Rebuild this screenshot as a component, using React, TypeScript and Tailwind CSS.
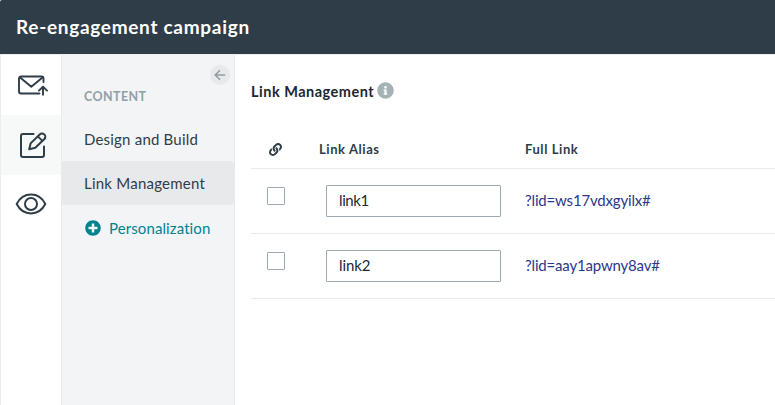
import React from "react";
import { FaInfoCircle, FaLink, FaPlusCircle } from "react-icons/fa";

const rows = [
  { alias: "link1", url: "?lid=ws17vdxgyilx#", aliasSpacing: "tracking-[-0.4px]" },
  { alias: "link2", url: "?lid=aay1apwny8av#", aliasSpacing: "tracking-[-0.1px]" },
];

function MailIcon() {
  return (
    <svg width="32" height="24" viewBox="0 0 32 24" fill="none" stroke="#2f3d48" strokeWidth="1.9" strokeLinecap="round" strokeLinejoin="round">
      <path d="M23.5 19.5H5A2 2 0 0 1 3 17.5V4.5A2 2 0 0 1 5 2.5H25.5A2 2 0 0 1 27.5 4.5V8" />
      <path d="M3.8 3.2L15.3 12.7L26.8 3.2M27 20.8V13.3M23 16.6L27 12.6L31 16.6" />
    </svg>
  );
}

function EditIcon() {
  return (
    <svg width="28" height="28" viewBox="0 0 28 28" fill="none" stroke="#2f3d48" strokeWidth="2" strokeLinecap="round" strokeLinejoin="round">
      <path d="M14.5 3H4A2 2 0 0 0 2 5V24A2 2 0 0 0 4 26H23A2 2 0 0 0 25 24V15.5" />
      <path d="M10.2 18.2L11.6 12.4L20.7 3.5A3.2 3.2 0 0 1 25.4 8L16.3 16.8ZM18.8 5.4L23.4 9.9" />
    </svg>
  );
}

function EyeIcon() {
  return (
    <svg width="32" height="24" viewBox="0 0 32 24" fill="none" stroke="#2f3d48" strokeWidth="2" strokeLinejoin="round">
      <path d="M1.7 12C8.2 -.6 23.8 -.6 30.3 12C23.8 24.6 8.2 24.6 1.7 12Z" />
      <circle cx="16" cy="12" r="6" />
    </svg>
  );
}

export default function App() {
  return (
    <div className="flex h-[405px] w-[775px] flex-col overflow-hidden bg-white font-['Lato',sans-serif] text-[#2f3d48]">
      <header className="flex h-[54px] shrink-0 items-center rounded-tl-[2px] bg-[#2f3d48] pl-4">
        <h1 className="whitespace-nowrap text-[19px] font-bold leading-6 tracking-[0.7px] text-white">Re-engagement campaign</h1>
      </header>
      <div className="flex flex-1 border-t border-[#ebedee]">
        <nav className="flex w-[61px] shrink-0 flex-col border-l border-[#ebedee]">
          <button className="flex h-[60px] items-center justify-center pl-px pt-0.5"><MailIcon /></button>
          <button className="flex h-[60px] items-center justify-center bg-[#f7f9f8] pl-[3px]"><EditIcon /></button>
          <button className="flex h-[60px] items-center justify-center pb-0.5"><EyeIcon /></button>
        </nav>
        <aside className="flex w-[174px] shrink-0 flex-col border-x border-[#e8eaec] bg-[#f3f4f6]">
          <div className="flex h-[30px] items-end justify-end pr-1">
            <button className="flex size-5 items-center justify-center rounded-full bg-[#e7e9ea]">
              <svg width="12" height="12" viewBox="0 0 12 12" fill="none" stroke="#8e9ca2" strokeWidth="1.5">
                <path d="M11.2 6H1.4M6 1.2L1.2 6L6 10.8" />
              </svg>
            </button>
          </div>
          <h2 className="mt-[3px] pl-[22px] text-[12.5px] font-bold leading-[18px] tracking-[0.4px] text-[#91a0a6]">CONTENT</h2>
          <a className="mt-[11px] flex h-11 items-center whitespace-nowrap pl-[22px] text-[15px] tracking-[0.2px]">Design and Build</a>
          <a className="flex h-11 items-center whitespace-nowrap rounded-r-sm bg-[#e8e9eb] pl-[22px] text-[15px] tracking-[0.23px]">Link Management</a>
          <a className="mt-px flex h-11 items-center whitespace-nowrap pl-[23px] text-[15px] tracking-[0.1px] text-[#00838f]">
            <FaPlusCircle size={16} className="mr-2 -mt-px" />
            Personalization
          </a>
        </aside>
        <main className="min-w-0 flex-1 pl-4 pt-[25px]">
          <div className="flex h-[22px] items-center">
            <h2 className="whitespace-nowrap pt-px text-[14.5px] font-bold tracking-[0.5px] text-[#1b2733]">Link Management</h2>
            <FaInfoCircle size={17} className="ml-[3px] -mt-0.5 text-[#a5b3b7]" />
          </div>
          <div className="mt-[29px] grid h-[38px] grid-cols-[68px_206px_1fr] items-center border-b border-[#e8eaeb] text-[13px] font-bold tracking-[0.57px]">
            <FaLink size={13} className="ml-[18px]" />
            <span>Link Alias</span>
            <span>Full Link</span>
          </div>
          {rows.map((row) => (
            <div key={row.alias} className="grid h-[65px] grid-cols-[68px_206px_1fr] items-center border-b border-[#e8eaeb] text-[15px]">
              <input type="checkbox" className="mb-2.5 ml-4 size-[18px] appearance-none rounded-[1px] border border-[#9dabb0] bg-white" />
              <input defaultValue={row.alias} className={"ml-[7px] h-8 w-[175px] rounded-[1px] border border-[#9dabb0] bg-white px-3 pb-0.5 text-[#1b2733] " + row.aliasSpacing} />
              <a className="whitespace-nowrap pb-px tracking-[-0.18px] text-[#2c378c]">{row.url}</a>
            </div>
          ))}
        </main>
      </div>
    </div>
  );
}
